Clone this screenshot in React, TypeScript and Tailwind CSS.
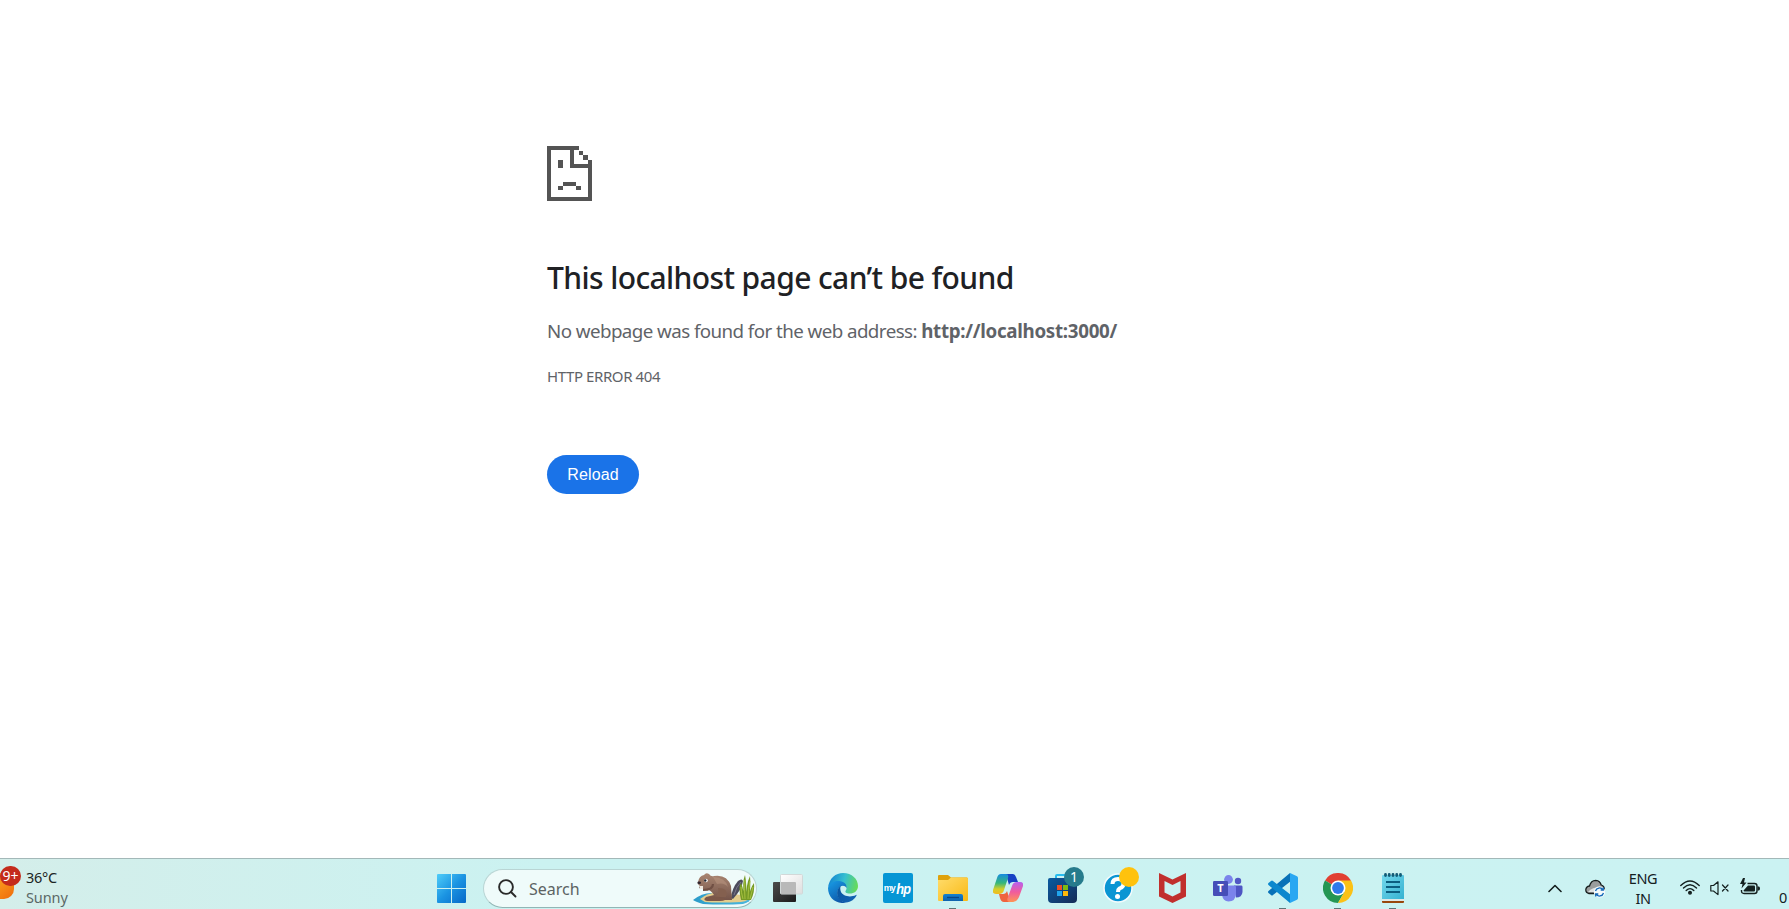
import React from "react";

const sans = "font-['Noto_Sans','Open_Sans',sans-serif]";

function SadPage() {
  return (
    <svg width="45" height="55" viewBox="0 0 45 55" fill="#545454" shapeRendering="crispEdges">
      <path d="M0 0H32V4H27V18H41V14H45V55H0ZM4 4V51H41V22H23V4Z" />
      <rect x="32" y="5" width="4" height="4" />
      <rect x="36" y="9" width="5" height="5" />
      <rect x="11" y="14" width="5" height="8" />
      <rect x="16" y="36" width="13" height="4" />
      <rect x="11" y="40" width="5" height="4" />
      <rect x="29" y="40" width="5" height="4" />
    </svg>
  );
}

function Windows() {
  return (
    <svg width="29" height="29" viewBox="0 0 29 29">
      <defs>
        <linearGradient id="win" x1="0" y1="0" x2="29" y2="29" gradientUnits="userSpaceOnUse">
          <stop stopColor="#4fcdf9" />
          <stop offset=".5" stopColor="#1b94e2" />
          <stop offset="1" stopColor="#0668c8" />
        </linearGradient>
      </defs>
      <path fill="url(#win)" d="M1 0H14V14H0V1Q0 0 1 0ZM15 0H28Q29 0 29 1V14H15ZM0 15H14V29H1Q0 29 0 28ZM15 15H29V28Q29 29 28 29H15Z" />
    </svg>
  );
}

function Beaver() {
  return (
    <svg width="62" height="34" viewBox="0 0 62 34">
      <defs>
        <linearGradient id="fur" x1="0" y1="0" x2="0" y2="1">
          <stop stopColor="#a98672" />
          <stop offset="1" stopColor="#755449" />
        </linearGradient>
        <linearGradient id="water" x1="0" y1="0" x2="1" y2="0">
          <stop stopColor="#2b9cc9" />
          <stop offset="1" stopColor="#4db8de" />
        </linearGradient>
      </defs>
      <path d="M0 28Q9 21 18 21L58 25Q58 30 50 32Q30 33 10 32Q3 30 0 28Z" fill="url(#water)" />
      <path d="M7 27Q14 21 26 20L56 24Q57 29 48 30Q25 31 12 30Z" fill="#e4cd8c" />
      <path d="M38 26Q39 16 45 9Q49 6 50 9Q49 17 40 27Z" fill="#4c4c5d" />
      <path d="M41 23Q43 15 48 10" stroke="#777489" fill="none" />
      <path d="M5 10Q6 4 11 3Q13 0 16 2Q18 5 21 4Q34 2 38 14L39 28H14Q11 27 13 25L21 23Q18 18 13 17L8 17Q5 16 7 14Q4 12 5 10Z" fill="url(#fur)" />
      <path d="M20 5Q32 5 35 15Q31 10 24 12" fill="#c29d87" opacity=".45" />
      <path d="M25 16Q36 16 33 25H21Q27 22 25 16Z" fill="#84604f" />
      <path d="M12 26Q23 23 31 26Q34 29 27 29H14Q10 28 12 26Z" fill="#7b5748" />
      <path d="M20 12Q20 18 10 18" stroke="#705044" strokeWidth="2.2" fill="none" />
      <ellipse cx="6.2" cy="10.8" rx="1.8" ry="1.3" fill="#302630" />
      <circle cx="13" cy="8.500" r="1.800" fill="#fff" />
      <circle cx="12.300" cy="8.500" r="1.200" fill="#1f2430" />
      <path d="M7 14H10V17H7Z" fill="#eee8df" />
      <path d="M48 28Q45 15 48 11Q51 18 51 28ZM51 28Q49 9 52 3Q54 12 53 28ZM53 28Q53 12 57 4Q58 13 56 28ZM55 28Q57 16 61 11Q62 20 58 28Z" fill="#769a26" />
      <path d="M50 27Q48 20 48 15M52 27Q51 15 52 8M55 27Q55 17 57 9M57 27Q59 19 60 15" stroke="#b3ca45" strokeWidth=".8" fill="none" />
    </svg>
  );
}

function TaskView() {
  return (
    <svg width="30" height="30" viewBox="0 0 30 30">
      <defs>
        <linearGradient id="tvd" x1="0" y1="0" x2="1" y2="1"><stop stopColor="#4b4b4b" /><stop offset="1" stopColor="#1b1b1b" /></linearGradient>
        <linearGradient id="tvl" x1="0" y1="0" x2="1" y2="1"><stop stopColor="#fff" /><stop offset="1" stopColor="#dedede" /></linearGradient>
      </defs>
      <rect y="9" width="23" height="20" rx="1" fill="url(#tvd)" />
      <rect x="7.5" y="1.5" width="22" height="19.500" rx="1" fill="url(#tvl)" stroke="#d2d8d8" />
      <path d="M8 9H22Q23 9 23 10V21H8Z" fill="#b9b9b9" />
    </svg>
  );
}

function Edge() {
  return (
    <svg width="30" height="30" viewBox="0 0 30 30">
      <defs>
        <linearGradient id="e1" x1="2" y1="5" x2="30" y2="12" gradientUnits="userSpaceOnUse"><stop stopColor="#1588d3" /><stop offset=".5" stopColor="#36bfd0" /><stop offset="1" stopColor="#68dc55" /></linearGradient>
        <linearGradient id="e2" x1="0" y1="12" x2="12" y2="30" gradientUnits="userSpaceOnUse"><stop stopColor="#1794df" /><stop offset="1" stopColor="#0d56a7" /></linearGradient>
        <linearGradient id="e3" x1="8" y1="12" x2="26" y2="28" gradientUnits="userSpaceOnUse"><stop stopColor="#07539d" /><stop offset="1" stopColor="#1264b4" /></linearGradient>
      </defs>
      <path d="M0 15C1 5 8 0 15 0C24 0 30 6 30 13C30 18 26 20.500 22 20.500C18 20.500 17 19 17.500 18C20 15 18 11 13 10C7 8.500 1 11 0 15Z" fill="url(#e1)" />
      <path d="M0 15C1 10 6 7.500 11 8C16 8.500 19 11 18.500 15C17 12 13 12 11 15C7 21 11 28 18 30C8 31 0 25 0 15Z" fill="url(#e2)" />
      <path d="M13 12.500C5 19 11 30 18 29.500C23 29 27 26 28.500 22.500Q29 21.500 28 22C22 25 15 23 13 19C12 17 12 14 13 12.500Z" fill="url(#e3)" />
    </svg>
  );
}

function MyHp() {
  return (
    <span className="flex h-[30px] w-[30px] items-center justify-center rounded-[2px] bg-[#0596d5] font-['Liberation_Sans',sans-serif] leading-none font-bold text-white italic">
      <span className="text-[9px] tracking-[-0.8px] not-italic">my</span><span className="inline-block scale-x-[0.85] text-[15px] tracking-[-1px]">hp</span>
    </span>
  );
}

function Folder() {
  return (
    <svg width="30" height="30" viewBox="0 0 30 30">
      <defs>
        <linearGradient id="fo" x1="0" y1="0" x2="1" y2="1"><stop stopColor="#ffdc6c" /><stop offset="1" stopColor="#f9b914" /></linearGradient>
        <linearGradient id="fb" x1="0" y1="0" x2="0" y2="1"><stop stopColor="#1681d2" /><stop offset="1" stopColor="#0f62ac" /></linearGradient>
      </defs>
      <path d="M0 3Q0 2 1 2H10L13 4.500H29Q30 5 30 6V12H0Z" fill="#dfa10c" />
      <path d="M0 7H10L13 4.500H29Q30 4.500 30 6V27Q30 28 29 28H1Q0 28 0 27Z" fill="url(#fo)" />
      <path d="M5 28V23Q5 21 7 21H23Q25 21 25 23V28Z" fill="url(#fb)" />
      <path d="M9 24.500H21" stroke="#0a4687" strokeWidth="1.3" />
    </svg>
  );
}

function Copilot() {
  return (
    <svg width="30" height="28" viewBox="0 0 30 28">
      <defs>
        <linearGradient id="c1" x1="0" y1="0" x2="0" y2="1"><stop stopColor="#168be1" /><stop offset=".45" stopColor="#35b77b" /><stop offset=".75" stopColor="#d2ce2b" /><stop offset="1" stopColor="#f4bb20" /></linearGradient>
        <linearGradient id="c2" x1="0" y1="0" x2="0" y2="1"><stop stopColor="#b761ef" /><stop offset=".5" stopColor="#f05c9d" /><stop offset="1" stopColor="#ff9455" /></linearGradient>
      </defs>
      <path d="M9 0H20Q22 0 23 3L25 8H20Q17 8 16 11L14 4Q13 1 9 0Z" fill="#1741c4" />
      <path d="M8 0H13Q16 0 15 4L11 16Q10 20 6 20H3Q-1 20 0 16L4 4Q5 0 8 0Z" fill="url(#c1)" />
      <path d="M6 20H10Q13 20 14 17L16 23Q17 27 21 28H11Q8 28 7 24Z" fill="#ef643f" />
      <path d="M24 8H27Q31 8 30 12L26 23Q24 28 20 28H17Q13 28 15 23L19 12Q20 8 24 8Z" fill="url(#c2)" />
    </svg>
  );
}

function Store() {
  return (
    <svg width="29" height="30" viewBox="0 0 29 30">
      <defs><linearGradient id="st" x1="0" y1="0" x2="1" y2="1"><stop stopColor="#0a5ba1" /><stop offset="1" stopColor="#142b56" /></linearGradient></defs>
      <path d="M8 7V3Q8 2 9 2H20V7" fill="none" stroke="#27bdf0" strokeWidth="2" />
      <path d="M2 5H27Q29 5 29 7V26Q29 30 25 30H4Q0 30 0 26V7Q0 5 2 5Z" fill="url(#st)" />
      <rect x="9" y="12" width="5" height="5" fill="#f15024" /><rect x="15" y="12" width="5" height="5" fill="#7dbb12" />
      <rect x="9" y="18" width="5" height="5" fill="#20a5ed" /><rect x="15" y="18" width="5" height="5" fill="#fdb90b" />
    </svg>
  );
}

function Help() {
  return (
    <svg width="30" height="30" viewBox="0 0 30 30">
      <circle cx="15" cy="15" r="14" fill="#0a95d3" stroke="#f3fbfd" strokeWidth="1.500" />
      <path d="M9.500 11Q9.500 6 15 6T20.500 11Q20.500 14 16.500 15.500Q15 16.500 15 19" fill="none" stroke="#fff" strokeWidth="4" />
      <circle cx="14.500" cy="23.500" r="2.500" fill="#fff" />
    </svg>
  );
}

function McAfee() {
  return (
    <svg width="27" height="30" viewBox="0 0 27 30">
      <path fillRule="evenodd" d="M0 0L13.500 6.500L27 0V23.500L13.500 30L0 23.500ZM5.500 8V19.500L13.500 23.500L21.500 19.500V8L13.500 12Z" fill="#c12f2d" />
    </svg>
  );
}

function Teams() {
  return (
    <svg width="30" height="27" viewBox="0 0 30 27">
      <circle cx="25" cy="6" r="3.200" fill="#5158c4" />
      <path d="M21 10.500H28.500Q29.500 10.500 29.500 12V17Q29 22.500 23 22.500Z" fill="#4e55c3" />
      <circle cx="15.500" cy="4.500" r="4.400" fill="#7b83eb" />
      <path d="M9 10.500H21.500Q23 10.500 23 12V19Q22.500 26.500 15.500 26.500Q10 26 9 20Z" fill="#7b83eb" />
      <rect y="6" width="15" height="15" rx="1.200" fill="#464eb8" />
      <text x="7.500" y="17.300" textAnchor="middle" fill="#fff" fontSize="11" fontWeight="700" fontFamily="Noto Sans, sans-serif">T</text>
    </svg>
  );
}

function VsCode() {
  return (
    <svg width="30" height="30" viewBox="0 0 30 30">
      <path d="M22 0L23 8L5 22Q4 23 3 22L.5 20Q-.5 19 .5 18Z" fill="#0871b8" />
      <path d="M22 30L23 22L5 8Q4 7 3 8L.5 10Q-.5 11 .5 12Z" fill="#0c88ce" />
      <path d="M22 0L29 3.300Q30 4 30 5V25Q30 26 29 26.700L22 30Z" fill="#2aa7f2" />
    </svg>
  );
}

function Chrome() {
  return (
    <svg width="30" height="30" viewBox="0 0 30 30">
      <path d="M15 15L2 7.500A15 15 0 0 1 28 7.500Z" fill="#e13f32" />
      <path d="M15 15L2 7.500A15 15 0 0 0 15 30L21.500 18.750Z" fill="#249653" />
      <path d="M15 7.500H28A15 15 0 0 1 15 30L21.500 18.750Z" fill="#fbc116" />
      <circle cx="15" cy="15" r="7.500" fill="#fff" /><circle cx="15" cy="15" r="5.900" fill="#2f7aeb" />
    </svg>
  );
}

function Notepad() {
  return (
    <svg width="22" height="30" viewBox="0 0 22 30">
      <defs><linearGradient id="np" x1="0" y1="0" x2="1" y2="1"><stop stopColor="#73d8ed" /><stop offset="1" stopColor="#36b2d1" /></linearGradient></defs>
      <path d="M0 27H22V29Q22 30 21 30H1Q0 30 0 29Z" fill="#98480d" /><path d="M0 25H22V28H0Z" fill="#e0e8e7" />
      <path d="M0 3Q0 2 1 2H21Q22 2 22 3V26H0Z" fill="url(#np)" />
      <path d="M4 9H18M4 14H18M4 19H18" stroke="#0b5e80" strokeWidth="2" />
      <path d="M3.500 1.500V2.500M7.250 1.500V2.500M11 1.500V2.500M14.750 1.500V2.500M18.500 1.500V2.500" stroke="#145b76" strokeWidth="2.800" strokeLinecap="round" />
    </svg>
  );
}

const apps = [
  { name: "Task view", icon: <TaskView /> },
  { name: "Edge", icon: <Edge /> },
  { name: "HP", icon: <MyHp /> },
  { name: "Files", icon: <Folder />, open: true },
  { name: "Copilot", icon: <Copilot /> },
  { name: "Store", icon: <Store />, badge: "1" },
  { name: "Help", icon: <Help />, dot: true },
  { name: "McAfee", icon: <McAfee /> },
  { name: "Teams", icon: <Teams /> },
  { name: "VS Code", icon: <VsCode />, open: true },
  { name: "Chrome", icon: <Chrome />, open: true },
  { name: "Notepad", icon: <Notepad />, open: true },
];

function Weather() {
  return (
    <div className="flex w-[437px] shrink-0">
      <div className="relative h-full w-[26px] shrink-0">
        <span className="absolute top-[14px] -left-[16px] h-[26px] w-[30px] rounded-[10px] bg-gradient-to-br from-[#ffb526] to-[#ee6a0b]" />
        <span className="absolute top-[7px] left-0 flex h-[20px] w-[21px] items-center justify-center rounded-full bg-[#c42b1c] pb-px text-[14px] leading-none text-white">9+</span>
      </div>
      <div className="flex flex-col pt-[8px] text-[14.500px] leading-[20px] tracking-[-0.3px]">
        <span className="text-[#1c2524]">36°C</span>
        <span className="tracking-[-0.1px] text-[#5b6866]">Sunny</span>
      </div>
    </div>
  );
}

function Tray() {
  return (
    <div className="ml-auto flex h-full w-[241px] shrink-0 text-[#14201f]">
      <svg className="mt-[25px] shrink-0" width="14" height="9" viewBox="0 0 14 9" fill="none" stroke="currentColor" strokeWidth="1.600" strokeLinecap="round" strokeLinejoin="round"><path d="M1 7.500L7 1.500L13 7.500" /></svg>
      <svg className="mt-[20px] ml-[23px] shrink-0" width="21" height="19" viewBox="0 0 21 19">
        <path d="M4 14.500Q.8 14 .8 10.800Q1 7.500 4.500 7Q6 1.300 10.800 1.300Q15 1.500 16.200 6Q19.500 7 19.200 10.500Q19 14 16 14.500Z" fill="#9a9d9d" stroke="#171d1d" strokeWidth="1.300" />
        <path d="M3 13Q7 8 16 8Q18 9 18 13Z" fill="#e0e3e3" />
        <circle cx="14.500" cy="13" r="5.700" fill="#f4fafb" />
        <path d="M10.500 12A4.200 4.200 0 0 1 18 10.800M18.300 8.500V11H15.700M18.500 14A4.200 4.200 0 0 1 11 15.200M10.700 17.500V15H13.300" fill="none" stroke="#1267b8" strokeWidth="1.300" />
      </svg>
      <div className="ml-[19px] flex w-[36px] shrink-0 flex-col items-center pt-[9px] text-[14.500px] leading-[20px] tracking-[-0.4px]"><span>ENG</span><span>IN</span></div>
      <svg className="mt-[21px] ml-[19px] shrink-0" width="20" height="15" viewBox="0 0 20 15" fill="none" stroke="currentColor" strokeWidth="1.400" strokeLinecap="round">
        <path d="M.8 5.500Q10-3.500 19.200 5.500M3.500 8Q10 1.500 16.500 8M6.200 10.600Q10 6.700 13.800 10.600" /><circle cx="10" cy="12.800" r="1.300" fill="currentColor" />
      </svg>
      <svg className="mt-[22px] ml-[10px] shrink-0" width="19" height="15" viewBox="0 0 19 15" fill="none" stroke="currentColor" strokeWidth="1.200" strokeLinejoin="round" strokeLinecap="round">
        <path d="M.8 4.500H3.500L8 .8V13.600L3.500 10H.8ZM12.500 4L18 10M18 4L12.500 10" />
      </svg>
      <svg className="mt-[19px] ml-[11px] shrink-0" width="20" height="18" viewBox="0 0 20 18" fill="none" stroke="currentColor">
        <path d="M7.500 5.500H14.500Q17 5.500 17 8V13Q17 15.500 14.500 15.500H4Q1.500 15.500 1.500 13V12" strokeWidth="1.400" />
        <path d="M8 7.500H14Q15 7.500 15 8.500V12.500Q15 13.500 14 13.500H4.500Q3.500 13.500 3.500 12.500Z" fill="currentColor" stroke="none" /><path d="M17.500 8.500H19Q20 9 20 10.500T19 12.500H17.500Z" fill="currentColor" stroke="none" />
        <path d="M3 0L0 6H2.500L1.500 10.500L6.500 4.500H4L5 0Z" fill="currentColor" stroke="none" />
      </svg>
      <span className="mt-[28px] ml-[19px] text-[14.500px] leading-[20px] whitespace-nowrap">0</span>
    </div>
  );
}

function Taskbar() {
  return (
    <footer className="flex h-[51px] w-full shrink-0 overflow-hidden border-t border-[#a3b8b8] bg-gradient-to-r from-[#d4eeea] via-[#cbf2f1] via-30% to-[#cbf2f2]">
      <Weather />
      <div className="w-[29px] shrink-0 pt-[15px]"><Windows /></div>
      <div className="mt-[10px] ml-[17px] flex h-[39px] w-[274px] shrink-0 items-center rounded-full border border-[#b9d5d4] border-b-[#91b6b5] bg-[#effbfa]">
        <svg className="ml-[14px]" width="19" height="19" viewBox="0 0 19 19" fill="none" stroke="#2a2a2a" strokeWidth="1.900" strokeLinecap="round"><circle cx="8" cy="8" r="6.900" /><path d="M13 13L17.500 17.500" /></svg>
        <span className="ml-[12px] text-[16px] tracking-[0px] text-[#5c6363]">Search</span>
        <span className="mr-[1px] ml-auto"><Beaver /></span>
      </div>
      <div className="ml-[3px] flex shrink-0">
        {apps.map((app) => (
          <div key={app.name} title={app.name} className="relative flex h-full w-[55px] items-center justify-center pt-[8px]">
            {app.icon}
            {app.badge && <span className="absolute top-[8px] right-[6px] flex h-5 w-5 items-center justify-center rounded-full bg-[#267b8c] text-[14px] leading-none text-white">{app.badge}</span>}
            {app.dot && <span className="absolute top-[8px] right-[6px] h-5 w-5 rounded-full bg-[#ffc20d]" />}
            {app.open && <span className="absolute bottom-0 h-px w-[7px] bg-[#5d7677]" />}
          </div>
        ))}
      </div>
      <Tray />
    </footer>
  );
}

export default function App() {
  return (
    <div className={`flex h-[909px] w-full flex-col overflow-hidden bg-white ${sans}`}>
      <main className="flex flex-1 flex-col items-start pt-[146px] pl-[547px] whitespace-nowrap text-[#5f6368]">
        <SadPage />
        <h1 className="mt-[57px] text-[30px] leading-[40px] font-medium tracking-[-0.6px] text-[#202124]">This localhost page can’t be found</h1>
        <p className="mt-[19px] text-[18.750px] leading-[28px] tracking-[-0.570px]">No webpage was found for the web address: <b className="font-bold tracking-[-0.3px]">http://localhost:3000/</b></p>
        <p className="mt-[19px] text-[15px] leading-[24px] tracking-[-0.4px]">HTTP ERROR 404</p>
        <button className="mt-[67px] h-[39px] w-[92px] rounded-full bg-[#1a73e8] font-['Liberation_Sans',Arial,sans-serif] text-[16px] tracking-[0.1px] text-white">Reload</button>
      </main>
      <Taskbar />
    </div>
  );
}
